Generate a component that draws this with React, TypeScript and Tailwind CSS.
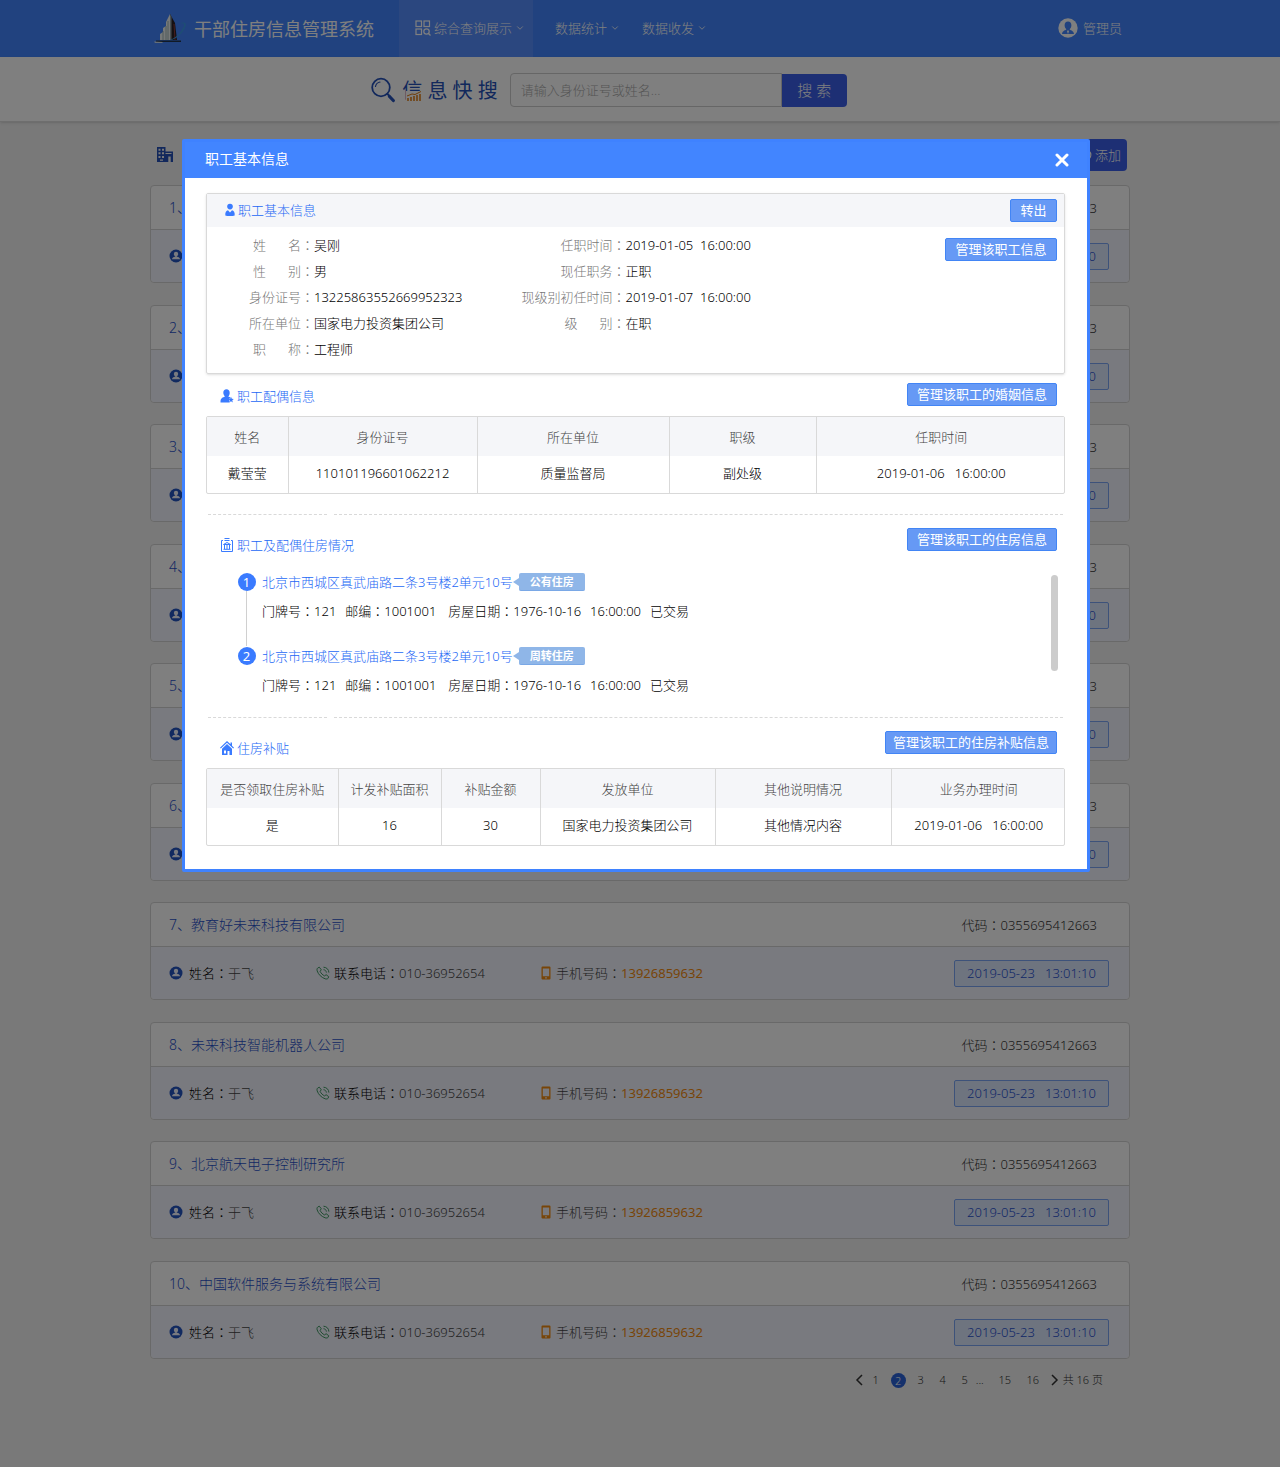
import { ChevronDown, CirclePlus } from "lucide-react"
import type { ReactNode } from "react"

interface Company {
  name: string
  code: string
}

const companies: Company[] = [
  { name: "北京科技有限公司", code: "0355695412663" },
  { name: "中国电力科学研究院", code: "0355695412663" },
  { name: "北京信息技术公司", code: "0355695412663" },
  { name: "航天科技集团公司", code: "0355695412663" },
  { name: "国家电力投资集团公司", code: "0355695412663" },
  { name: "北京软件服务公司", code: "0355695412663" },
  { name: "教育好未来科技有限公司", code: "0355695412663" },
  { name: "未来科技智能机器人公司", code: "0355695412663" },
  { name: "北京航天电子控制研究所", code: "0355695412663" },
  { name: "中国软件服务与系统有限公司", code: "0355695412663" },
]

const leftFields = [
  { label: "姓名", value: "吴刚" },
  { label: "性别", value: "男" },
  { label: "身份证号", value: "13225863552669952323" },
  { label: "所在单位", value: "国家电力投资集团公司" },
  { label: "职称", value: "工程师" },
]

const rightFields = [
  { label: "任职时间", value: "2019-01-05  16:00:00" },
  { label: "现任职务", value: "正职" },
  { label: "现级别初任时间", value: "2019-01-07  16:00:00" },
  { label: "级别", value: "在职" },
]

const houses = [
  { address: "北京市西城区真武庙路二条3号楼2单元10号", tag: "公有住房" },
  { address: "北京市西城区真武庙路二条3号楼2单元10号", tag: "周转住房" },
]

const spouseTable = {
  cols: ["w-[81px]", "w-[189px]", "w-[192px]", "w-[147px]", "w-[250px]"],
  head: ["姓名", "身份证号", "所在单位", "职级", "任职时间"],
  row: ["戴莹莹", "110101196601062212", "质量监督局", "副处级", "2019-01-06   16:00:00"],
}

const subsidyTable = {
  cols: ["w-[131px]", "w-[103px]", "w-[99px]", "w-[175px]", "w-[176px]", "w-[175px]"],
  head: ["是否领取住房补贴", "计发补贴面积", "补贴金额", "发放单位", "其他说明情况", "业务办理时间"],
  row: ["是", "16", "30", "国家电力投资集团公司", "其他情况内容", "2019-01-06   16:00:00"],
}

// the TC face centres the full-width colon in its box
function Colon() {
  return <span className="font-['Noto_Sans_CJK_TC',sans-serif]">：</span>
}

function LogoIcon() {
  return (
    <svg viewBox="0 0 32 32" className="h-8 w-8" aria-hidden="true">
      <path d="M16 1l-4 8v4l-3 2v4l-3 2v6h10z" fill="#eef3f2" />
      <path d="M16 1l5 9 2 17h-7z" fill="#2b2024" />
      <path d="M16 1l1.500 3v23H16z" fill="#8f9ea4" />
      <path d="M12 13v14M9 18v9M14 8v19" stroke="#8ba3a6" strokeWidth=".8" />
      <path d="M20 11l1 16" stroke="#8d3a3a" strokeWidth="1" />
      <path d="M0 29c14 1 25-4 30-16 .8-2.600-1-3.300-5-2.500 5-2 7.500-1.200 6.600 2.500C28 24 17 30 0 29z" fill="#3c9be8" />
      <path d="M2 27.500h25V29H2z" fill="#22344c" />
      <path d="M0 28.500l9 .5-1 1H1z" fill="#c8dcf0" />
    </svg>
  )
}

function GridSearchIcon() {
  return (
    <svg viewBox="0 0 16 16" className="h-4 w-4" fill="none" stroke="currentColor" strokeWidth="1.2" aria-hidden="true">
      <rect x="1" y="1" width="5.500" height="5.500" />
      <rect x="9" y="1" width="5.500" height="5.500" />
      <rect x="1" y="9" width="5.500" height="5.500" />
      <circle cx="11.500" cy="11.500" r="2.700" />
      <path d="M13.500 13.500l2 2" />
    </svg>
  )
}

function AdminIcon() {
  return (
    <svg viewBox="0 0 20 20" className="h-5 w-5" aria-hidden="true">
      <circle cx="10" cy="10" r="9.700" fill="#fff" />
      <path d="M10 3.500c-2.200 0-3.400 1.600-3.400 3.700 0 1.800.9 3.300 1.800 4-.2 1-4 1-4.400 4.800h12c-.4-3.800-4.200-3.800-4.400-4.800.9-.7 1.800-2.200 1.800-4 0-2.100-1.200-3.700-3.400-3.700z" fill="#4285ff" />
      <path d="M10 12l1 1.200-1 2.800-1-2.800z" fill="#fff" />
    </svg>
  )
}

function MagnifierIcon() {
  return (
    <svg viewBox="0 0 24 26" className="h-[26px] w-6" fill="none" stroke="#2450b8" strokeLinecap="round" aria-hidden="true">
      <circle cx="10" cy="10.500" r="8.800" strokeWidth="1.800" />
      <path d="M16.500 17l2 2" strokeWidth="1.800" />
      <path d="M18.500 19.500l3.800 4" strokeWidth="3.200" />
      <path d="M4.500 9.500c.4-2.500 2-4 4.500-4.500" strokeWidth="1.200" />
    </svg>
  )
}

function BuildingIcon() {
  return (
    <svg viewBox="0 0 16 16" className="h-4 w-4" fill="#2450b8" aria-hidden="true">
      <path
        fillRule="evenodd"
        d="M0 0h8.500v4.500H16V15h-2.300V9.500h-2.400V15H0zM1.500 1.700v2h2v-2zM5 1.700v2h2v-2zM1.500 5.300v2h2v-2zM5 5.300v2h2v-2zM1.500 8.900v2h2v-2zM5 8.900v2h2v-2zM3 12.500v1.200h3v-1.200zM8.500 6v1h6V6z"
      />
    </svg>
  )
}

function ContactIcon() {
  return (
    <svg viewBox="0 0 14 14" className="h-[14px] w-[14px]" aria-hidden="true">
      <circle cx="7" cy="7" r="6.500" fill="#2455c0" />
      <circle cx="7" cy="5" r="2.200" fill="#f3f5ff" />
      <path d="M3 10.300c.2-2 2-2.500 4-2.500s3.800.5 4 2.500z" fill="#f3f5ff" />
      <path d="M6.200 6.500h1.600V9H6.200z" fill="#f3f5ff" />
    </svg>
  )
}

function PhoneIcon() {
  return (
    <svg viewBox="0 0 14 14" className="h-[14px] w-[14px]" fill="none" stroke="#3f9a63" strokeWidth="1" aria-hidden="true">
      <path d="M3.300 1.200l2 2.600-1.200 1.500c.8 2 2.500 3.700 4.500 4.600l1.500-1.200 2.600 2-.6 1.600c-.6.7-1.800.9-3 .5C5.300 11.400 2.500 8.600 1.200 5c-.4-1.300-.2-2.400.5-3z" />
      <path d="M7.500 3.700c1.700.2 2.700 1.200 2.900 2.900M7.500 1.200c3.200.2 5.200 2.200 5.400 5.400" />
    </svg>
  )
}

function MobileIcon() {
  return (
    <svg viewBox="0 0 10 14" className="h-[14px] w-[10px]" aria-hidden="true">
      <path fillRule="evenodd" fill="#f08a10" d="M1.500.5h7a1 1 0 011 1v11a1 1 0 01-1 1h-7a1 1 0 01-1-1v-11a1 1 0 011-1zM1.800 2.500v7.800h6.400V2.500zM4.200 11.300v1.200h1.600v-1.200z" />
    </svg>
  )
}

function UserIcon() {
  return (
    <svg viewBox="0 0 14 14" className="h-[14px] w-[14px]" fill="#3a7bff" aria-hidden="true">
      <circle cx="7" cy="3.600" r="2.800" />
      <path d="M2.300 12.500c-.3-3.300 1-4.700 2.700-5.200l2 2.200 2-2.200c1.700.5 3 1.900 2.700 5.200-2 .8-7.400.8-9.400 0z" />
    </svg>
  )
}

function SpouseIcon() {
  return (
    <svg viewBox="0 0 14 14" className="h-[14px] w-[14px]" fill="#3a7bff" aria-hidden="true">
      <path d="M6.500.3C4.500.3 3.300 1.800 3.300 3.700c0 1.600.7 2.800 1.700 3.500C4.500 8.300.5 8 .5 12.500v1h9l-.6-3.300 1.700-1.600-2.400-1c.9-.8 1.500-2 1.500-3.900C9.700 1.800 8.500.3 6.500.3z" />
      <path d="M11 7.800l.8 1.900 2 .2-1.500 1.400.5 2.100-1.800-1.100-1.800 1.100.5-2.100-1.500-1.400 2-.2z" />
    </svg>
  )
}

function HousingIcon() {
  return (
    <svg viewBox="0 0 14 14" className="h-[14px] w-[14px]" fill="none" stroke="#3a7bff" strokeWidth="1" aria-hidden="true">
      <path d="M3 2.500H1.500v11h11v-11H11M4.500.5h5M4.500 2.500h5" />
      <path d="M3.500 6.500L7 4.500l3.500 2zM4.500 7v4M7 7v4M9.500 7v4M3.500 11.300h7" />
    </svg>
  )
}

function HouseIcon() {
  return (
    <svg viewBox="0 0 14 14" className="h-[14px] w-[14px]" fill="#3a7bff" aria-hidden="true">
      <path d="M7 0L0 6.800l.8.8L7 1.700l6.200 5.900.8-.8-2-2V1.500h-1.500v1.800z" />
      <path fillRule="evenodd" d="M7 3L2 7.800V14h5.500v-4h2v4H12V7.800zM4 9.500v3h2v-3z" />
    </svg>
  )
}

function ArrowIcon({ d }: { d: string }) {
  return (
    <svg viewBox="0 0 8 12" className="h-3 w-2" fill="none" stroke="currentColor" strokeWidth="1.500" aria-hidden="true">
      <path d={d} />
    </svg>
  )
}

function NavItem({ children, icon, active }: { children: ReactNode; icon?: ReactNode; active?: boolean }) {
  return (
    <a href="#" className={`flex h-full items-center gap-[3px] pb-0.5 ${active ? "bg-[#568eff] pr-2 pl-4" : ""}`}>
      {icon}
      {children}
      <ChevronDown className="h-[10px] w-[10px]" />
    </a>
  )
}

function CompanyCard({ company, index }: { company: Company; index: number }) {
  return (
    <li className="rounded border border-[#d2d2d2] bg-white odd:mb-[22px] even:not-last:mb-[21px]">
      <div className="flex h-[43px] items-center justify-between pr-8 pl-[18px]">
        <h2 className="text-sm">
          <a href="#" className="text-[#1f4fc8]">
            {index + 1}、{company.name}
          </a>
        </h2>
        <span className="text-[#333]">
          代码
          <Colon />
          {company.code}
        </span>
      </div>
      <div className="flex h-[53px] items-center rounded-b border-t border-[#d2d2d2] bg-[#f3f5ff] pr-5 pl-[18px] text-[#444]">
        <div className="flex w-[147px] items-center gap-[6px]">
          <ContactIcon />
          <span>
            <span className="text-black">
              姓名
              <Colon />
            </span>
            于飞
          </span>
        </div>
        <div className="flex w-[225px] items-center gap-1">
          <PhoneIcon />
          <span>
            <span className="text-black">
              联系电话
              <Colon />
            </span>
            010-36952654
          </span>
        </div>
        <div className="flex items-center gap-[5px]">
          <MobileIcon />
          <span>
            手机号码
            <Colon />
            <span className="font-normal text-[#f08a10]">13926859632</span>
          </span>
        </div>
        <time className="ml-auto flex h-[27px] w-[155px] items-center justify-center rounded-xs border border-[#7aa5f5] bg-[#dce8ff] whitespace-pre text-[#1f4fd0]">
          2019-05-23   13:01:10
        </time>
      </div>
    </li>
  )
}

function Pagination() {
  return (
    <nav className="mt-[10px] flex h-[22px] items-center justify-end pr-[27px] text-[11px] text-[#333]">
      <button type="button" aria-label="上一页">
        <ArrowIcon d="M7 1L2 6l5 5" />
      </button>
      <button type="button" className="ml-0.5 w-[22px]">1</button>
      <button type="button" className="mx-1 h-[15px] w-[15px] rounded-full bg-[#2a62d8] leading-[15px] text-white">2</button>
      <button type="button" className="w-[22px]">3</button>
      <button type="button" className="w-[22px]">4</button>
      <button type="button" className="w-[22px]">5</button>
      <span className="w-[15px]">...</span>
      <button type="button" className="w-7">15</button>
      <button type="button" className="w-7">16</button>
      <button type="button" aria-label="下一页" className="mx-1">
        <ArrowIcon d="M1 1l5 5-5 5" />
      </button>
      <span>共 16 页</span>
    </nav>
  )
}

function ActionButton({ children, className }: { children: ReactNode; className: string }) {
  return (
    <button
      type="button"
      className={`h-[23px] rounded-xs border border-[#4285f5] bg-[#6699f5] text-center leading-[21px] font-normal text-white ${className}`}
    >
      {children}
    </button>
  )
}

function SectionTitle({ icon, children }: { icon: ReactNode; children: ReactNode }) {
  return (
    <h3 className="flex items-center gap-[3px] pl-[14px] leading-5 text-[#2468f5]">
      {icon}
      {children}
    </h3>
  )
}

function Field({ label, value, labelWidth }: { label: string; value: string; labelWidth: string }) {
  return (
    <div className="flex">
      <dt className={`flex justify-end text-[#777] ${labelWidth}`}>
        {label.length === 2 ? (
          <span className="flex w-12 justify-between">
            <span>{label[0]}</span>
            <span>{label[1]}</span>
          </span>
        ) : (
          label
        )}
        <Colon />
      </dt>
      <dd className="whitespace-pre text-black">{value}</dd>
    </div>
  )
}

function DataTable({ cols, head, row }: { cols: string[]; head: string[]; row: string[] }) {
  return (
    <div className="mt-[10px] overflow-hidden rounded-xs border border-[#d9d9d9]">
      <table className="w-full table-fixed border-collapse text-center">
        <thead>
          <tr className="h-[39px] bg-[#f5f6f9] text-[#444]">
            {head.map((title, i) => (
              <th key={title} scope="col" className={`border-r border-[#d9d9d9] font-light last:border-r-0 ${cols[i]}`}>
                {title}
              </th>
            ))}
          </tr>
        </thead>
        <tbody>
          <tr className="h-[37px] text-black">
            {row.map((cell, i) => (
              <td key={head[i]} className="border-r border-[#d9d9d9] pb-1 whitespace-pre last:border-r-0">
                {cell}
              </td>
            ))}
          </tr>
        </tbody>
      </table>
    </div>
  )
}

function Divider() {
  return (
    <div className="flex gap-[7px] px-0.5">
      <div className="w-[119px] border-t border-dashed border-[#d9d9d9]" />
      <div className="flex-1 border-t border-dashed border-[#d9d9d9]" />
    </div>
  )
}

function HouseItem({ index, address, tag }: { index: number; address: string; tag: string }) {
  return (
    <li className="group flex gap-[6px]">
      <div className="flex w-[19px] flex-col items-center">
        <span className="mt-px h-[18px] w-[18px] rounded-full bg-[#3a7bff] text-center leading-[18px] font-normal text-white">{index}</span>
        <span className="w-px flex-1 bg-[#d0d0d0] group-last:hidden" />
      </div>
      <div className="pb-[25px] leading-5 group-last:pb-0">
        <div className="flex items-center">
          <a href="#" className="text-[#2468f5]">{address}</a>
          <span className="border-y-4 border-r-[6px] border-y-transparent border-r-[#8fb6e8]" />
          <span className="h-[18px] w-[66px] rounded-xs border-b border-[#7aa8e6] bg-[#8fb6e8] text-center text-[11px] leading-[18px] font-bold text-white">
            {tag}
          </span>
        </div>
        <p className="mt-[9px] flex text-black">
          <span className="mr-[9px]">门牌号<Colon />121</span>
          <span className="mr-3">邮编<Colon />1001001</span>
          <span className="mr-[9px]">房屋日期<Colon />1976-10-16</span>
          <span className="mr-[9px]">16:00:00</span>
          <span>已交易</span>
        </p>
      </div>
    </li>
  )
}

function EmployeeDialog() {
  return (
    <section
      role="dialog"
      aria-labelledby="dialog-title"
      className="w-full max-w-[908px] rounded-xs border-3 border-[#3f82ff] bg-white"
    >
      <header className="flex h-9 items-center justify-between bg-[#4285ff] pr-[18px] pb-0.5 pl-5 text-white">
        <h2 id="dialog-title" className="text-sm font-normal">职工基本信息</h2>
        <button type="button" aria-label="关闭">
          <svg viewBox="0 0 14 14" className="mt-0.5 h-[14px] w-[14px]" stroke="currentColor" strokeWidth="3" strokeLinecap="round" aria-hidden="true">
            <path d="M2 2l10 10M12 2L2 12" />
          </svg>
        </button>
      </header>

      <div className="pt-[15px] pr-[22px] pb-[23px] pl-[21px]">
        <div className="rounded-xs border border-[#d9d9d9] shadow-sm">
          <div className="flex h-[33px] items-center justify-between bg-[#f5f6f9] pr-[7px]">
            <h3 className="flex items-center gap-px pb-px pl-4 leading-5 text-[#2468f5]">
              <UserIcon />
              职工基本信息
            </h3>
            <ActionButton className="w-[47px]">转出</ActionButton>
          </div>
          <div className="flex h-[146px] items-start pt-[5px] pr-[7px] leading-[26px]">
            <dl>
              {leftFields.map((field) => (
                <Field key={field.label} {...field} labelWidth="w-[107px]" />
              ))}
            </dl>
            <dl className="ml-[58px]">
              {rightFields.map((field) => (
                <Field key={field.label} {...field} labelWidth="w-[105px]" />
              ))}
            </dl>
            <ActionButton className="mt-[6px] ml-auto w-28">管理该职工信息</ActionButton>
          </div>
        </div>

        <div className="mt-[9px] flex items-end justify-between pr-2">
          <SectionTitle icon={<SpouseIcon />}>职工配偶信息</SectionTitle>
          <ActionButton className="w-[150px]">管理该职工的婚姻信息</ActionButton>
        </div>
        <DataTable {...spouseTable} />

        <div className="mt-5">
          <Divider />
        </div>

        <div className="mt-[13px] flex items-end justify-between pr-2">
          <SectionTitle icon={<HousingIcon />}>职工及配偶住房情况</SectionTitle>
          <ActionButton className="mb-1 w-[150px]">管理该职工的住房信息</ActionButton>
        </div>
        <div className="mt-[17px] flex items-start justify-between pr-[7px] pl-[31px]">
          <ol>
            {houses.map((house, i) => (
              <HouseItem key={house.tag} index={i + 1} {...house} />
            ))}
          </ol>
          <div className="mt-[3px] h-24 w-[7px] rounded-full bg-[#ccc]" />
        </div>

        <div className="mt-[22px]">
          <Divider />
        </div>

        <div className="mt-[13px] flex items-end justify-between pr-2">
          <SectionTitle icon={<HouseIcon />}>住房补贴</SectionTitle>
          <ActionButton className="mb-1 w-[172px]">管理该职工的住房补贴信息</ActionButton>
        </div>
        <DataTable {...subsidyTable} />
      </div>
    </section>
  )
}

export default function App() {
  return (
    <div className="relative min-h-screen bg-[#f2f2f2] font-['Noto_Sans','Noto_Sans_CJK_SC',sans-serif] text-[13px] leading-5 font-light">
      <header className="bg-[#4285ff] text-white">
        <div className="mx-auto flex h-[57px] max-w-[980px] items-center pl-1">
          <LogoIcon />
          <h1 className="ml-2 text-lg font-normal">干部住房信息管理系统</h1>
          <nav className="ml-[25px] flex h-full items-center gap-[22px]">
            <NavItem active icon={<GridSearchIcon />}>综合查询展示</NavItem>
            <NavItem>数据统计</NavItem>
            <NavItem>数据收发</NavItem>
          </nav>
          <a href="#" className="mr-2 ml-auto flex items-center gap-[5px] pb-0.5">
            <AdminIcon />
            管理员
          </a>
        </div>
      </header>

      <form className="flex h-[65px] items-center justify-center border-b border-[#dcdcdc] bg-white pt-0.5 pr-[62px] shadow-sm">
        <MagnifierIcon />
        <label htmlFor="keyword" className="relative mt-0.5 ml-[7px] text-xl font-normal text-[#2450b8]">
          信 息 快 搜
          <svg viewBox="0 0 16 10" className="absolute bottom-1 left-1 h-[10px] w-4 bg-white" stroke="#e07a10" strokeWidth="1.500" fill="none" aria-hidden="true">
            <path d="M2 10V7M5 10V6M8 10V5M11 10V4M14 10V3" />
            <path d="M1 5l5-2 3 .5 6-3" strokeWidth="1" />
          </svg>
        </label>
        <input
          id="keyword"
          type="text"
          placeholder="请输入身份证号或姓名..."
          className="ml-3 h-[34px] w-[272px] rounded-l-sm border border-[#ccc] bg-white px-[10px] placeholder:text-[#aaa]"
        />
        <button type="button" className="h-[33px] w-[65px] rounded-r-sm bg-[#3b5fe8] text-[15px] text-white">搜 索</button>
      </form>

      <main className="mx-auto max-w-[980px] pt-[17px] pb-[76px]">
        <div className="mb-[14px] flex h-8 items-center justify-between pr-[3px] pl-[7px]">
          <BuildingIcon />
          <button type="button" className="flex h-8 w-[68px] items-center justify-end gap-[3px] rounded-sm bg-[#3b5fe8] pr-[6px] text-white">
            <CirclePlus className="h-[14px] w-[14px]" />
            添加
          </button>
        </div>
        <ul>
          {companies.map((company, i) => (
            <CompanyCard key={company.name} company={company} index={i} />
          ))}
        </ul>
        <Pagination />
      </main>

      <div className="absolute inset-0 flex items-start justify-center bg-black/50 pt-[139px] pr-2">
        <EmployeeDialog />
      </div>
    </div>
  )
}
